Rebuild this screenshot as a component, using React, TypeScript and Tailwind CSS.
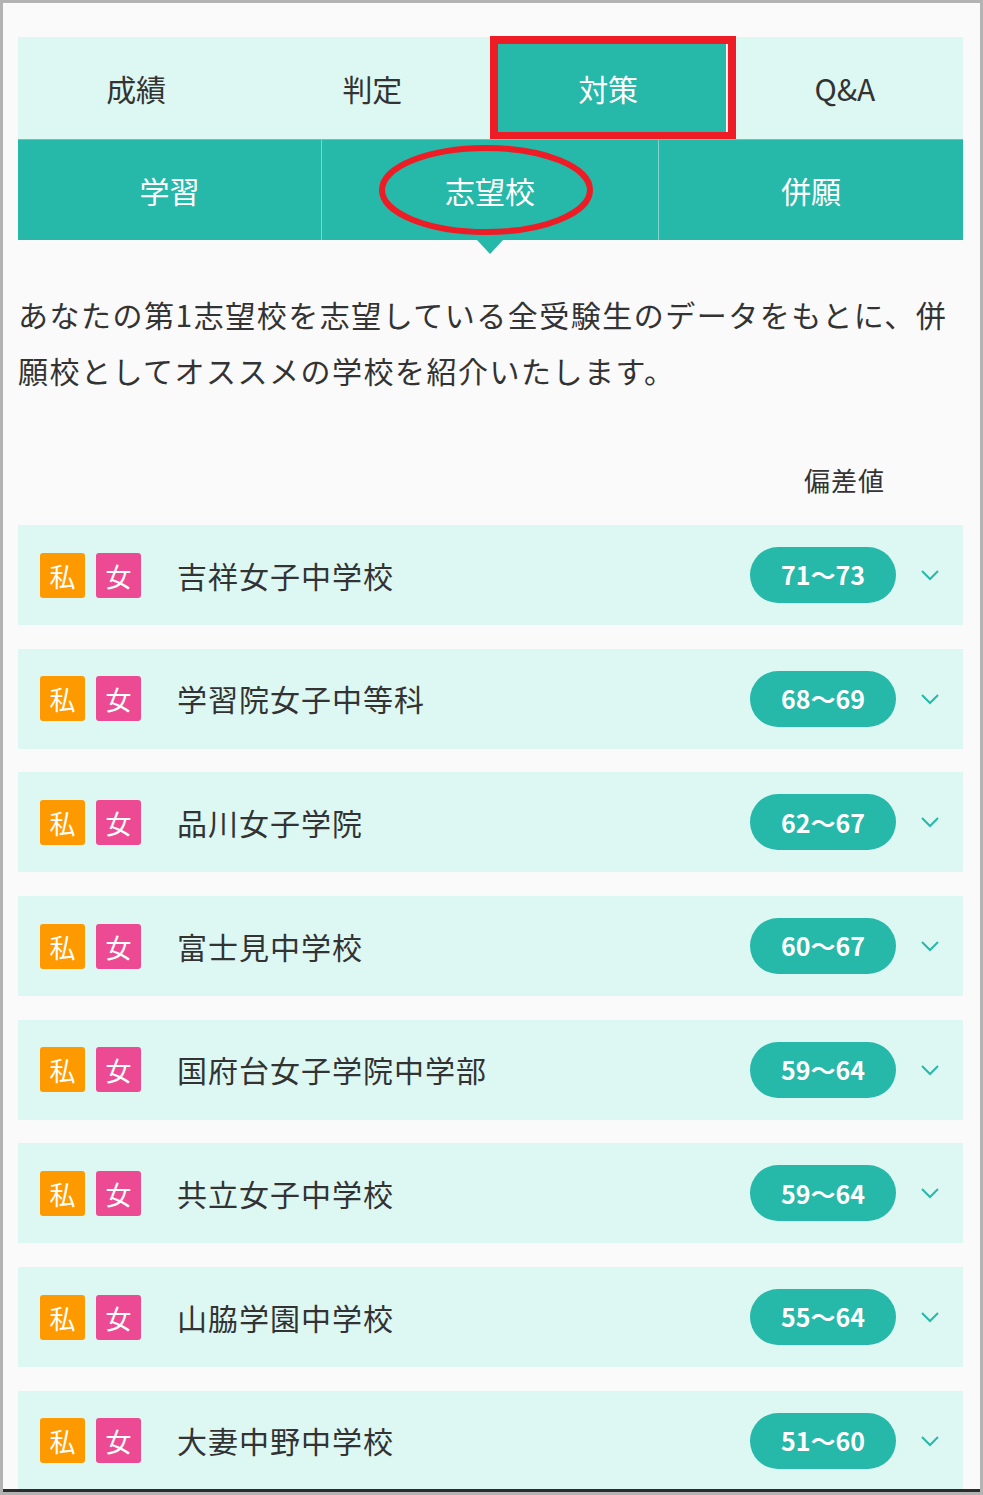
import React from "react";

const schools = [
  { name: "吉祥女子中学校", range: "71～73" },
  { name: "学習院女子中等科", range: "68～69" },
  { name: "品川女子学院", range: "62～67" },
  { name: "富士見中学校", range: "60～67" },
  { name: "国府台女子学院中学部", range: "59～64" },
  { name: "共立女子中学校", range: "59～64" },
  { name: "山脇学園中学校", range: "55～64" },
  { name: "大妻中野中学校", range: "51～60" },
];

const font = { fontFamily: '"Noto Sans CJK JP", "Noto Sans", sans-serif' };

function Chevron() {
  return (
    <svg width="20" height="12" viewBox="0 0 20 12" className="block">
      <polyline points="2,2 10,10 18,2" fill="none" stroke="#26b8a9" strokeWidth="2" />
    </svg>
  );
}

export default function App() {
  return (
    <div className="w-[983px] h-[1495px] bg-[#b3b3b3] px-[3px] pt-[3px] pb-[3px]" style={font}>
      <div className="h-full bg-[#fafafa] border-b-[3px] border-[#2b2b2b] overflow-hidden pl-[15px] pr-[17px] pt-[34px]">
        {/* Top tabs */}
        <div className="grid grid-cols-4 h-[102px] bg-[#ddf8f3] text-[30px] text-[#333]">
          <div className="flex items-center justify-center">成績</div>
          <div className="flex items-center justify-center">判定</div>
          <div className="relative flex items-center justify-center bg-[#26b8a9] text-white border-r border-white">
            対策
            <div className="absolute left-[-1px] right-[-10px] top-[-1px] bottom-[-1px] border-[8px] border-[#ee1c25]" />
          </div>
          <div className="flex items-center justify-center">Q&amp;A</div>
        </div>
        {/* Sub tabs */}
        <div className="relative flex h-[101px] bg-[#26b8a9] text-[30px] text-white border-t border-[#5fcbbf]">
          <div className="w-[304px] flex items-center justify-center border-r border-[#7fd6cc]">学習</div>
          <div className="relative w-[337px] flex items-center justify-center border-r border-[#7fd6cc]">
            志望校
            <svg className="absolute left-[54px] top-[3px]" width="220" height="94" viewBox="0 0 220 94">
              <ellipse cx="110" cy="47" rx="104" ry="42" fill="none" stroke="#ee1c25" strokeWidth="6" />
            </svg>
            <div className="absolute left-1/2 -translate-x-1/2 bottom-[-14px] w-0 h-0 border-l-[13px] border-r-[13px] border-t-[14px] border-l-transparent border-r-transparent border-t-[#26b8a9]" />
          </div>
          <div className="flex-1 flex items-center justify-center">併願</div>
        </div>
        {/* Description */}
        <p className="mt-[46px] text-[30px] leading-[56px] tracking-[1.5px] text-[#333] whitespace-nowrap [text-spacing-trim:space-all]">
          あなたの第1志望校を志望している全受験生のデータをもとに、併
          <br />
          願校としてオススメの学校を紹介いたします。
        </p>
        {/* Header */}
        <div className="mt-[64px] flex justify-end pr-[78px] text-[26px] tracking-[1px] text-[#333] leading-[36px]">
          偏差値
        </div>
        {/* Rows */}
        <div className="mt-[27px] flex flex-col gap-[23.7px]">
          {schools.map((s) => (
            <div key={s.name} className="h-[100px] shrink-0 bg-[#ddf8f3] flex items-center pl-[22px] pr-[23px]">
              <div className="w-[45px] h-[45px] rounded-[3px] bg-[#ff9900] text-white text-[26px] flex items-center justify-center">私</div>
              <div className="ml-[11px] w-[45px] h-[45px] rounded-[3px] bg-[#ec4b93] text-white text-[26px] flex items-center justify-center">女</div>
              <div className="ml-[36px] flex-1 text-[30px] tracking-[1px] text-[#333]">{s.name}</div>
              <div className="w-[146px] h-[56px] rounded-full bg-[#26b8a9] text-white font-bold text-[25px] flex items-center justify-center">
                {s.range}
              </div>
              <div className="ml-[24px]">
                <Chevron />
              </div>
            </div>
          ))}
        </div>
      </div>
    </div>
  );
}
